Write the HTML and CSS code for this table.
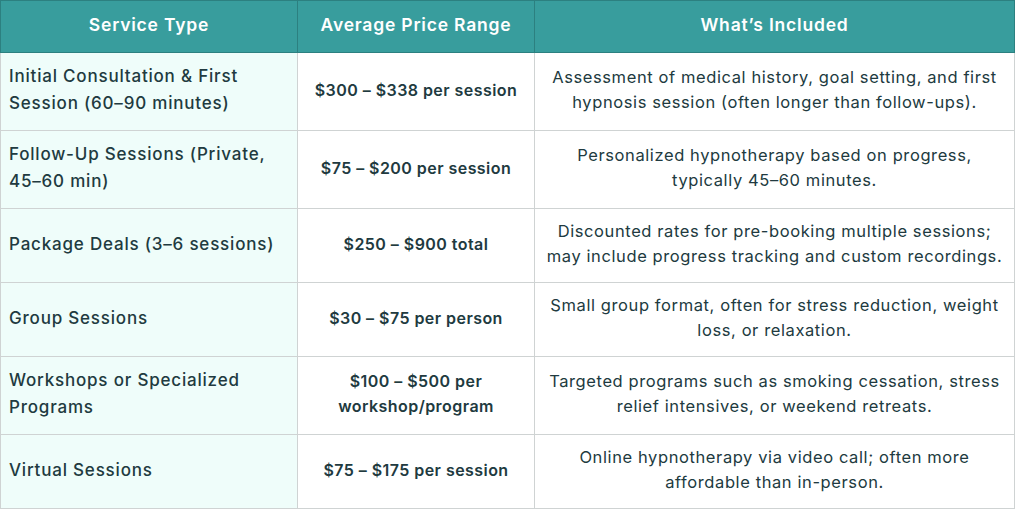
FILE: index.html
```html
<!DOCTYPE html>
<html lang="en">
<head>
<meta charset="utf-8">
<title>Hypnotherapy Pricing</title>
<link rel="stylesheet" href="styles.css">
</head>
<body>
<table class="price-table">
  <colgroup>
    <col class="c1">
    <col class="c2">
    <col class="c3">
  </colgroup>
  <thead>
    <tr>
      <th>Service Type</th>
      <th>Average Price Range</th>
      <th>What’s Included</th>
    </tr>
  </thead>
  <tbody>
    <tr>
      <td class="service">Initial Consultation &amp; First Session (60–90 minutes)</td>
      <td class="price">$300 – $338 per session</td>
      <td class="desc">Assessment of medical history, goal setting, and first hypnosis session (often longer than follow-ups).</td>
    </tr>
    <tr>
      <td class="service">Follow-Up Sessions (Private, 45–60 min)</td>
      <td class="price">$75 – $200 per session</td>
      <td class="desc">Personalized hypnotherapy based on progress, typically 45–60 minutes.</td>
    </tr>
    <tr>
      <td class="service">Package Deals (3–6 sessions)</td>
      <td class="price">$250 – $900 total</td>
      <td class="desc">Discounted rates for pre-booking multiple sessions; may include progress tracking and custom recordings.</td>
    </tr>
    <tr>
      <td class="service">Group Sessions</td>
      <td class="price">$30 – $75 per person</td>
      <td class="desc">Small group format, often for stress reduction, weight loss, or relaxation.</td>
    </tr>
    <tr>
      <td class="service">Workshops or Specialized Programs</td>
      <td class="price">$100 – $500 per workshop/program</td>
      <td class="desc">Targeted programs such as smoking cessation, stress relief intensives, or weekend retreats.</td>
    </tr>
    <tr>
      <td class="service">Virtual Sessions</td>
      <td class="price">$75 – $175 per session</td>
      <td class="desc">Online hypnotherapy via video call; often more affordable than in-person.</td>
    </tr>
  </tbody>
</table>
</body>
</html>
```
FILE: styles.css
```css
html, body {
  margin: 0;
  padding: 0;
  background: #ffffff;
}

body {
  font-family: Inter, "Noto Sans", sans-serif;
  color: #213a40;
}

.price-table {
  width: 1014px;
  border-collapse: collapse;
  table-layout: fixed;
}

.c1 { width: 297px; }
.c2 { width: 237px; }
.c3 { width: 480px; }

.price-table th {
  background: #389d9d;
  color: #ffffff;
  font-weight: 600;
  font-size: 17.5px;
  letter-spacing: 0.8px;
  line-height: 27px;
  padding: 10px 8px 14px;
  text-align: center;
  border: 1px solid #2c8080;
}

.price-table td {
  border: 1px solid #cfd3d3;
  padding: 10px 8px 13px;
  vertical-align: middle;
}

.service {
  background: #effdfa;
  font-size: 17px;
  letter-spacing: 0.8px;
  line-height: 27px;
  font-weight: 500;
  text-align: left;
  padding-left: 6px;
  padding-right: 38px;
}

.price {
  font-size: 16px;
  letter-spacing: 0.45px;
  line-height: 25px;
  font-weight: 600;
  text-align: center;
}

.desc {
  font-size: 16.5px;
  letter-spacing: 0.6px;
  line-height: 25px;
  font-weight: 400;
  text-align: center;
  padding-left: 6px;
  padding-right: 6px;
}
```
